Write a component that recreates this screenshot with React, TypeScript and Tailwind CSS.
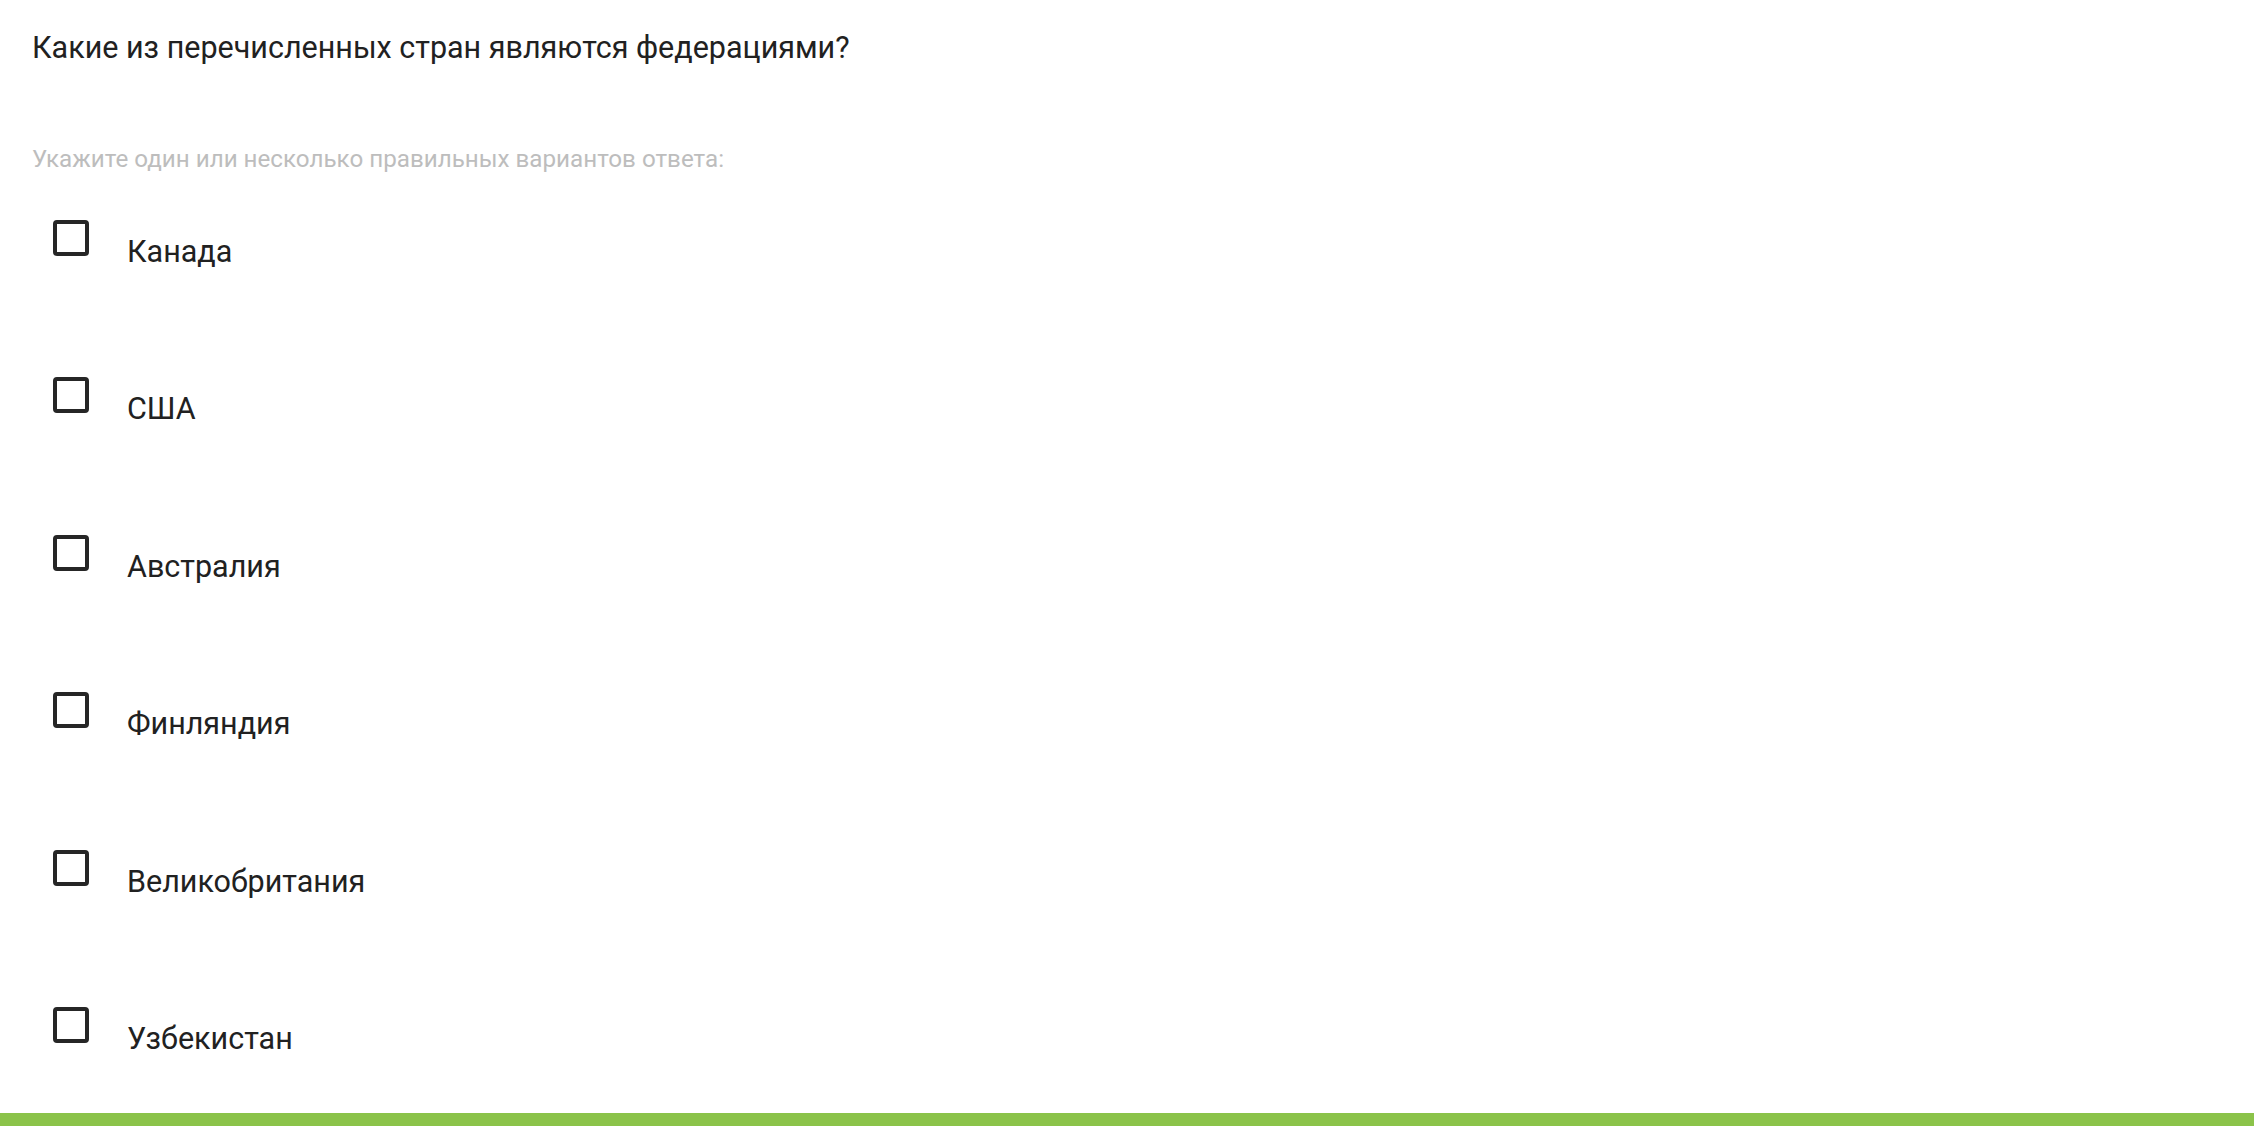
import React from "react";

const options = ["Канада", "США", "Австралия", "Финляндия", "Великобритания", "Узбекистан"];

export default function App() {
  return (
    <div
      className="h-screen w-full bg-white flex flex-col overflow-hidden"
      style={{ fontFamily: "Roboto, 'Noto Sans', sans-serif" }}
    >
      <div className="flex-1 min-h-0 pl-[32px]">
        <h1 className="pt-[28px] text-[30.5px] leading-[40px] font-normal text-[#212121]">
          Какие из перечисленных стран являются федерациями?
        </h1>
        <p className="mt-[75px] text-[24.2px] leading-[32px] text-[#bdbdbd]">
          Укажите один или несколько правильных вариантов ответа:
        </p>
        <div className="mt-[45px] flex flex-col gap-[121.4px]">
          {options.map((o) => (
            <label key={o} className="flex items-start h-[36px] cursor-pointer">
              <span className="ml-[21px] w-[36px] h-[36px] shrink-0 rounded-[4px] border-[4px] border-[#262626] bg-white" />
              <span className="ml-[38px] mt-[14px] text-[30.5px] leading-[36px] text-[#212121] whitespace-nowrap">
                {o}
              </span>
            </label>
          ))}
        </div>
      </div>
      <div className="h-[13px] w-full bg-[#8bc34a] shrink-0" />
    </div>
  );
}
